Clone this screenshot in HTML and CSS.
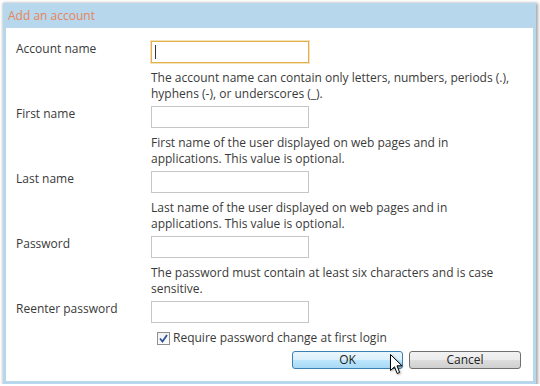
FILE: index.html
```html
<!DOCTYPE html>
<html>
<head>
<meta charset="utf-8">
<link rel="stylesheet" href="styles.css">
</head>
<body>
<div class="dialog">
  <div class="titlebar">Add an account</div>
  <div class="content">
    <div class="field">
      <div class="label">Account name</div>
      <div class="input focused"><span class="caret"></span></div>
      <div class="desc">The account name can contain only letters, numbers, periods (.),<br>hyphens (-), or underscores (_).</div>
    </div>
    <div class="field">
      <div class="label">First name</div>
      <div class="input"></div>
      <div class="desc">First name of the user displayed on web pages and in<br>applications. This value is optional.</div>
    </div>
    <div class="field">
      <div class="label">Last name</div>
      <div class="input"></div>
      <div class="desc">Last name of the user displayed on web pages and in<br>applications. This value is optional.</div>
    </div>
    <div class="field">
      <div class="label">Password</div>
      <div class="input"></div>
      <div class="desc">The password must contain at least six characters and is case<br>sensitive.</div>
    </div>
    <div class="field last">
      <div class="label">Reenter password</div>
      <div class="input"></div>
    </div>
    <div class="check-row">
      <span class="checkbox"><svg width="9" height="9" viewBox="0 0 9 9"><path d="M1 4.5 L3.5 7.5 L8 1" fill="none" stroke="#2f4f9a" stroke-width="1.8"/></svg></span>
      <span>Require password change at first login</span>
    </div>
    <div class="buttons">
      <div class="btn ok">OK</div>
      <div class="btn cancel">Cancel</div>
    </div>
  </div>
  <svg class="cursor" width="14" height="22" viewBox="0 0 14 22"><path d="M0.5 0.5 L0.5 16.5 L4.5 12.8 L7.2 19.5 L9.6 18.5 L7 11.8 L12 11.8 Z" fill="#fff" stroke="#000" stroke-width="1"/></svg>
</div>
</body>
</html>
```
FILE: styles.css
```css
html, body {
  margin: 0;
  padding: 0;
  background: #fff;
}
body {
  font-family: "Open Sans", "Noto Sans", sans-serif;
  font-size: 12px;
  color: #3a3a3a;
}
.dialog {
  position: relative;
  box-sizing: border-box;
  margin: 3px 0 0 3px;
  width: 533px;
  height: 381px;
  border: 3px solid #b6d7ec;
  border-top: 0;
  background: #fff;
  box-shadow: 1px 1px 3px 1px rgba(0,0,0,0.35);
  display: flex;
  flex-direction: column;
}
.titlebar {
  height: 25px;
  background: #b6d7ec;
  color: #e8845a;
  font-size: 12px;
  line-height: 26px;
  margin: 0 -3px;
  padding-left: 5px;
}
.content {
  padding: 13px 12px 0 10px;
  display: flex;
  flex-direction: column;
}
.field {
  display: grid;
  grid-template-columns: 135px 1fr;
  align-items: start;
  margin-bottom: 4px;
}
.field.last { margin-bottom: 0; }
.label {
  line-height: 16px;
}
.input {
  box-sizing: border-box;
  width: 158px;
  height: 22px;
  border: 1px solid #c6c6c6;
  background: #fff;
  position: relative;
}
.input.focused {
  border: 1px solid #e3b04f;
  box-shadow: 0 0 0 1px #f6e2b8;
}
.caret {
  position: absolute;
  left: 3px;
  top: 3px;
  width: 1px;
  height: 14px;
  background: #333;
}
.desc {
  grid-column: 2;
  margin-top: 7px;
  line-height: 16px;
  white-space: nowrap;
}
.check-row {
  margin: 7px 0 0 141px;
  display: flex;
  align-items: center;
  gap: 3px;
  line-height: 16px;
}
.checkbox {
  box-sizing: border-box;
  width: 13px;
  height: 13px;
  border: 1px solid #8f8f8f;
  background: linear-gradient(#f0f0f0, #fcfcfc);
  display: flex;
  align-items: center;
  justify-content: center;
}
.buttons {
  display: flex;
  justify-content: flex-end;
  gap: 6px;
  margin-top: 5px;
}
.btn {
  box-sizing: border-box;
  height: 18px;
  line-height: 16px;
  text-align: center;
  border-radius: 3px;
  color: #222;
}
.ok {
  width: 111px;
  border: 1px solid #3c7fb1;
  background: linear-gradient(#eaf6fd 0%, #d9f0fc 50%, #bee6fd 51%, #a7d9f5 100%);
}
.cancel {
  width: 112px;
  border: 1px solid #707070;
  background: linear-gradient(#f2f2f2 0%, #ebebeb 50%, #dddddd 51%, #cfcfcf 100%);
}
.cursor {
  position: absolute;
  left: 384px;
  top: 351px;
  filter: drop-shadow(1px 1px 1px rgba(0,0,0,0.3));
}
```
